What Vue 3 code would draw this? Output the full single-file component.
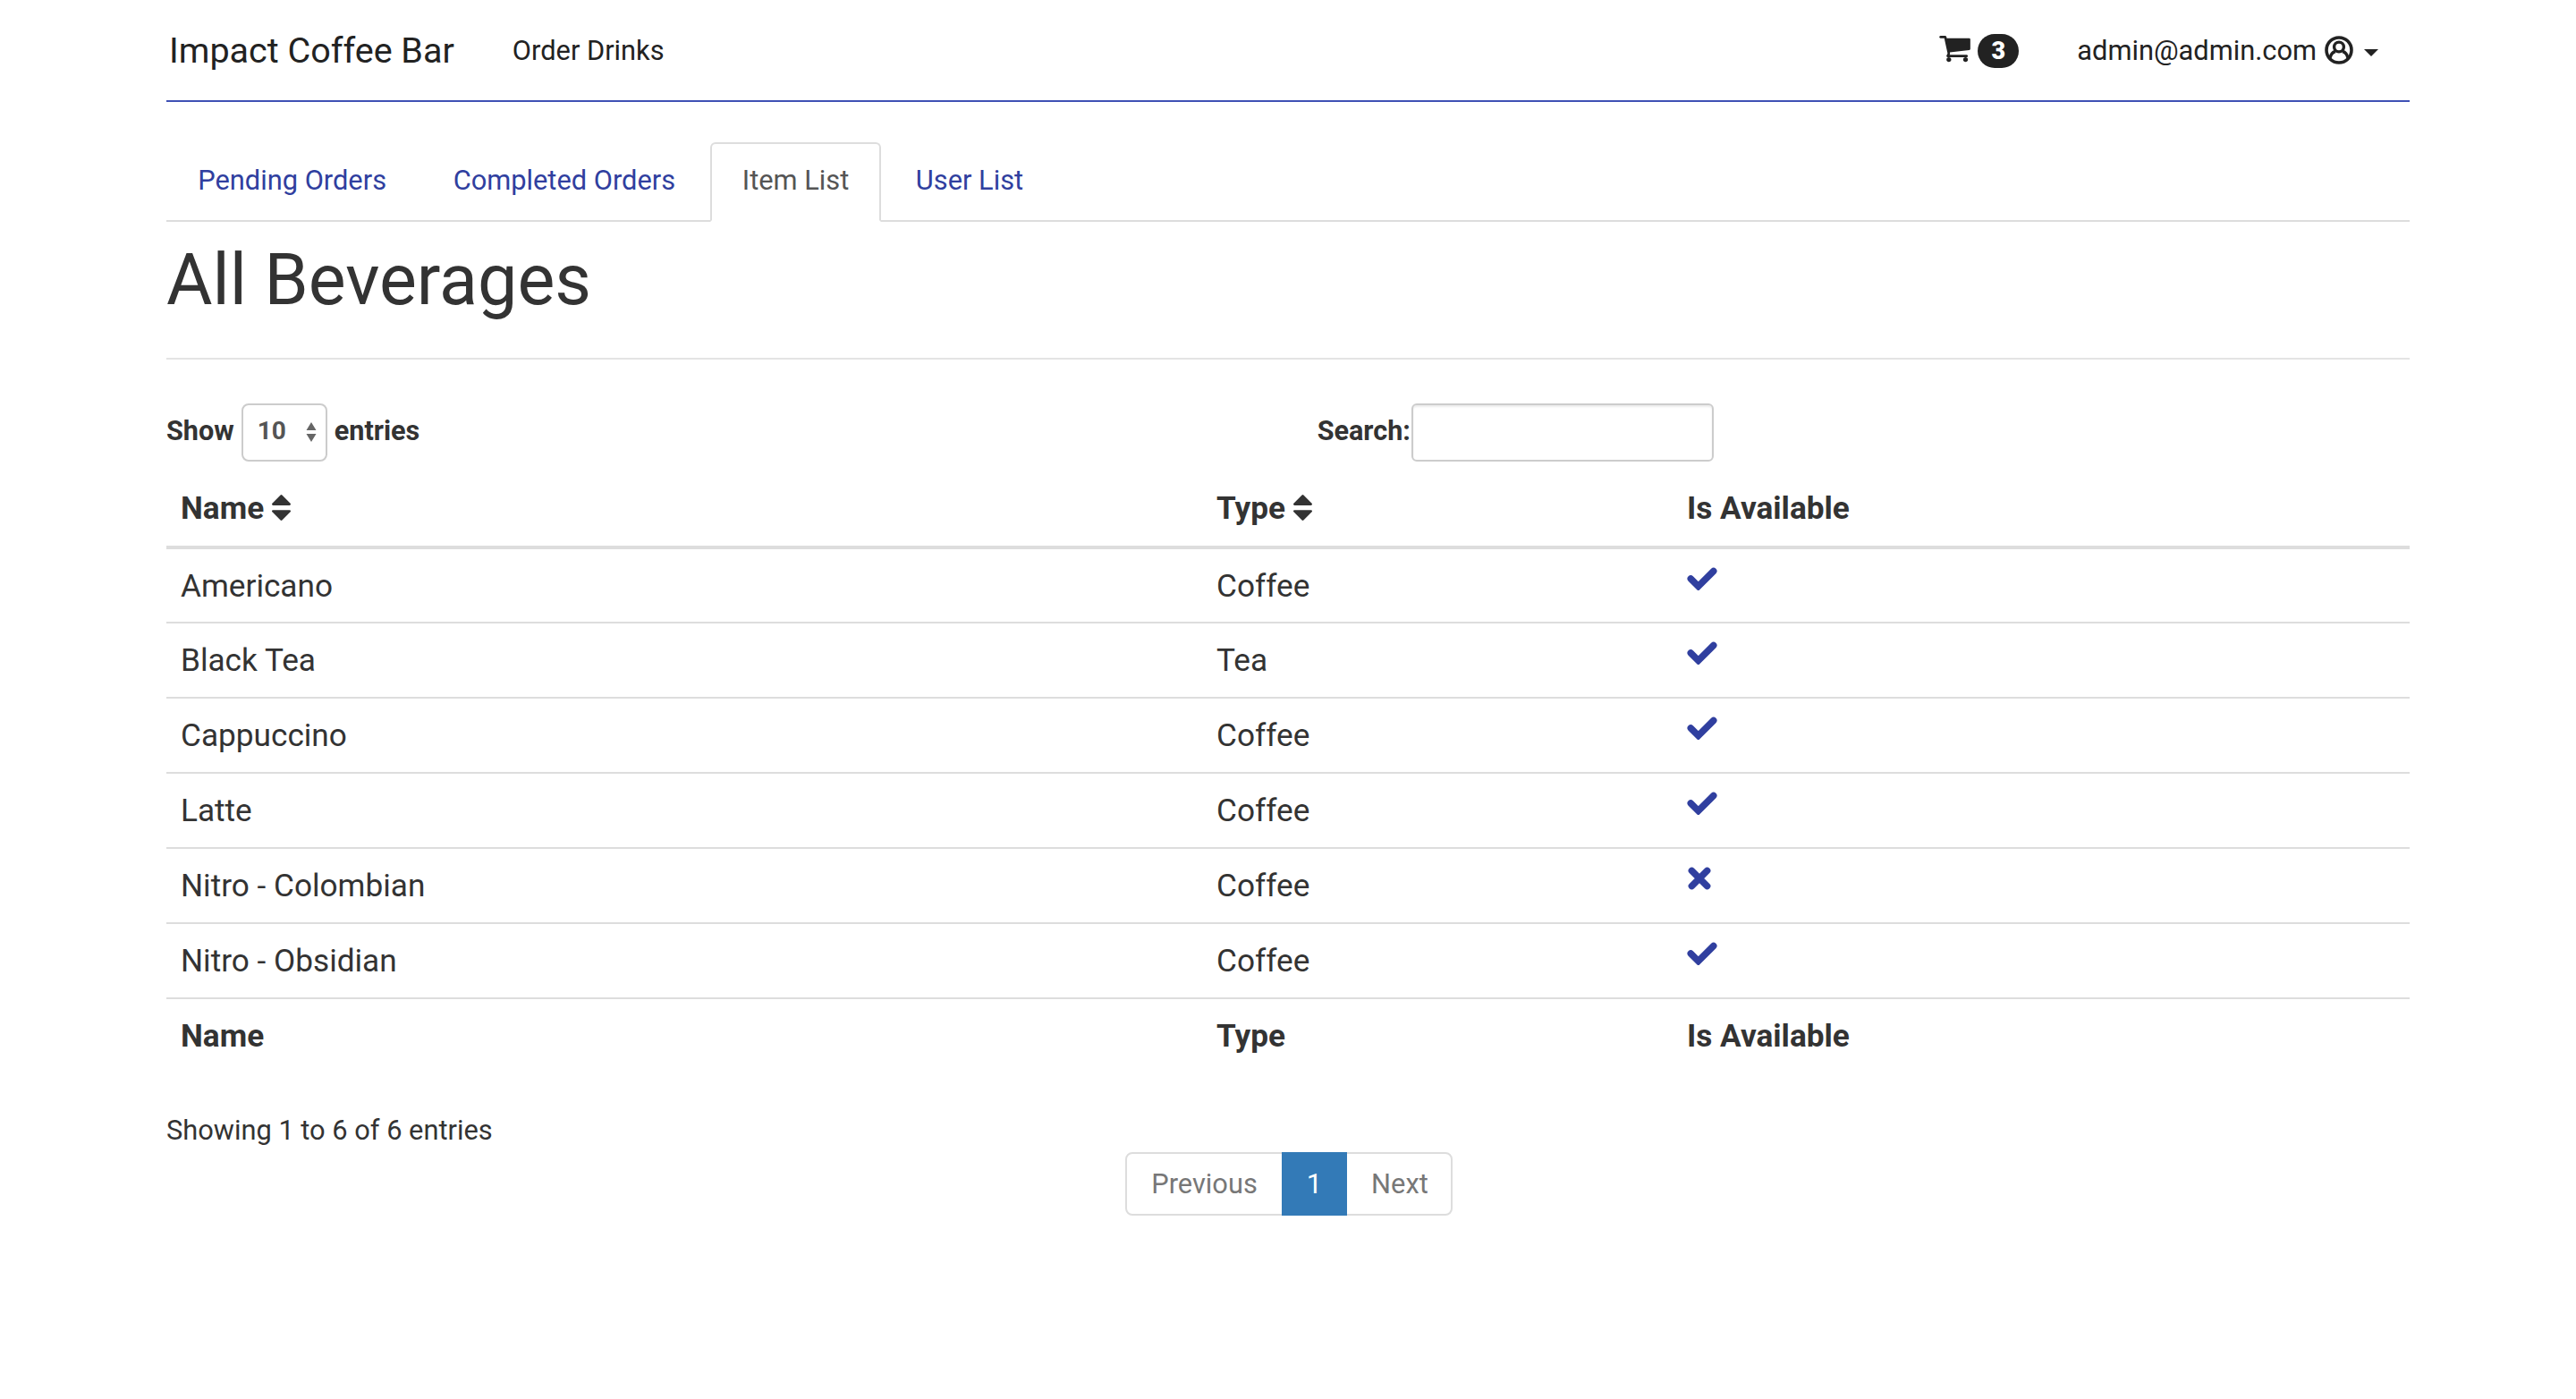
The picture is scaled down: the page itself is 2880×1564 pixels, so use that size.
<template>
  <div class="page">
    <nav class="navbar">
      <a class="brand">Impact Coffee Bar</a>
      <a class="nav-link">Order Drinks</a>
      <div class="nav-right">
        <svg class="cart" viewBox="0 128 1664 1536"><path fill="#222" d="M640 1408q0 52-38 90t-90 38-90-38-38-90 38-90 90-38 90 38 38 90zm896 0q0 52-38 90t-90 38-90-38-38-90 38-90 90-38 90 38 38 90zm128-1088v512q0 24-16.5 42.5t-40.5 21.5l-1044 122q13 60 13 70 0 16-24 64h920q26 0 45 19t19 45-19 45-45 19h-1024q-26 0-45-19t-19-45q0-11 8-31.5t16-36 21.5-40 15.5-29.5l-177-823h-204q-26 0-45-19t-19-45 19-45 45-19h256q16 0 28.5 6.5t19.5 15.5 13 24.5 8 26 5.5 29.5 4.5 26h1201q26 0 45 19t19 45z"/></svg>
        <span class="badge">3</span>
        <span class="email">admin@admin.com</span>
        <svg class="user" viewBox="0 0 32 32">
          <circle cx="16" cy="16" r="14" fill="none" stroke="#222" stroke-width="3.6"/>
          <circle cx="16" cy="12.5" r="5.4" fill="none" stroke="#222" stroke-width="3.4"/>
          <path d="M6 25c1-5 4-7 6-7.500M26 25c-1-5-4-7-6-7.500" fill="none" stroke="#222" stroke-width="3.4"/>
        </svg>
        <span class="caret"></span>
      </div>
    </nav>

    <ul class="tabs">
      <li v-for="tab in tabs" :key="tab" class="tab" :class="{ active: tab === 'Item List' }">{{ tab }}</li>
    </ul>

    <h1 class="title">All Beverages</h1>

    <div class="dt-top">
      <div class="dt-length">
        <span class="dt-label">Show</span>
        <div class="select">
          <span>10</span>
          <svg class="select-arrows" viewBox="0 0 12 24">
            <path d="M6 1l5.500 9H.5zM6 23L.5 14h11z" fill="#666"/>
          </svg>
        </div>
        <span class="dt-label">entries</span>
      </div>
      <label class="dt-search">
        <span class="dt-label">Search:</span>
        <input type="text" />
      </label>
    </div>

    <table class="table">
      <colgroup>
        <col class="col-name" />
        <col class="col-type" />
        <col />
      </colgroup>
      <thead>
        <tr>
          <th>Name <svg class="sort" viewBox="384 240 1024 1360"><path fill="#333" :d="sortPath"/></svg></th>
          <th>Type <svg class="sort" viewBox="384 240 1024 1360"><path fill="#333" :d="sortPath"/></svg></th>
          <th>Is Available</th>
        </tr>
      </thead>
      <tbody>
        <tr v-for="item in items" :key="item.name">
          <td>{{ item.name }}</td>
          <td>{{ item.type }}</td>
          <td>
            <svg v-if="item.available" class="mark check" viewBox="0 0 32 24">
              <path d="M4 12l8 8L28 4" fill="none" stroke="#303f9f" stroke-width="7" stroke-linecap="round" stroke-linejoin="miter"/>
            </svg>
            <svg v-else class="mark cross" viewBox="0 0 26 24">
              <path d="M5 4l16 16M21 4L5 20" fill="none" stroke="#303f9f" stroke-width="7" stroke-linecap="round"/>
            </svg>
          </td>
        </tr>
      </tbody>
      <tfoot>
        <tr>
          <th>Name</th>
          <th>Type</th>
          <th>Is Available</th>
        </tr>
      </tfoot>
    </table>

    <div class="dt-info">Showing 1 to 6 of 6 entries</div>

    <div class="pager-wrap">
      <div class="pager">
        <a class="page-btn">Previous</a>
        <a class="page-btn current">1</a>
        <a class="page-btn">Next</a>
      </div>
    </div>
  </div>
</template>

<script setup>
const tabs = ['Pending Orders', 'Completed Orders', 'Item List', 'User List']

const items = [
  { name: 'Americano', type: 'Coffee', available: true },
  { name: 'Black Tea', type: 'Tea', available: true },
  { name: 'Cappuccino', type: 'Coffee', available: true },
  { name: 'Latte', type: 'Coffee', available: true },
  { name: 'Nitro - Colombian', type: 'Coffee', available: false },
  { name: 'Nitro - Obsidian', type: 'Coffee', available: true }
]

const sortPath = 'M1408 1088q0 26-19 45l-448 448q-19 19-45 19t-45-19l-448-448q-19-19-19-45t19-45 45-19h896q26 0 45 19t19 45zm0-384q0 26-19 45t-45 19h-896q-26 0-45-19t-19-45 19-45l448-448q19-19 45-19t45 19l448 448q19 19 19 45z'
</script>

<style>
body {
  margin: 0;
  background: #fff;
}
</style>

<style scoped>
.page {
  width: 2508px;
  margin: 0 auto;
  height: 1564px;
  font-family: Roboto, "Liberation Sans", sans-serif;
  font-size: 35.2px;
  color: #333;
}

.navbar {
  display: flex;
  align-items: center;
  height: 112px;
  border-bottom: 2px solid #3f51b5;
  color: #222;
  padding-left: 3px;
}

.brand {
  font-size: 39.5px;
  margin-right: 65px;
}

.nav-link {
  font-size: 30.8px;
}

.nav-right {
  display: flex;
  align-items: center;
  margin-left: auto;
  padding-right: 35px;
}

.cart {
  width: 35px;
  height: 32px;
  margin-right: 8px;
}

.badge {
  display: flex;
  align-items: center;
  justify-content: center;
  width: 46px;
  height: 38px;
  margin-top: 2px;
  border-radius: 19px;
  background: #222;
  color: #fff;
  font-size: 27px;
  font-weight: 900;
  margin-right: 65px;
}

.email {
  font-size: 30.8px;
  margin-right: 9px;
}

.user {
  width: 32px;
  height: 32px;
  margin-right: 12px;
}

.caret {
  width: 0;
  height: 0;
  margin-top: 6px;
  border-left: 8px solid transparent;
  border-right: 8px solid transparent;
  border-top: 8px solid #222;
}

.tabs {
  display: flex;
  list-style: none;
  margin: 45px 0 0;
  padding: 0;
  height: 89px;
  border-bottom: 2px solid #ddd;
  box-sizing: border-box;
}

.tab {
  box-sizing: border-box;
  height: 89px;
  padding: 0 33.3px;
  margin-right: 4px;
  border: 2px solid transparent;
  border-radius: 6px 6px 0 0;
  color: #303f9f;
  font-size: 30.8px;
  line-height: 81px;
}

.tab.active {
  color: #555;
  border-color: #ddd;
  border-bottom-color: #fff;
  background: #fff;
}

.title {
  margin: 0;
  padding: 15px 0 34px;
  height: 103px;
  border-bottom: 2px solid #e4e4e4;
  font-size: 79px;
  font-weight: 400;
  line-height: 100px;
  color: #333;
}

.dt-top {
  display: flex;
  justify-content: space-between;
  align-items: center;
  width: 1730px;
  margin-top: 49px;
  font-size: 30.6px;
  font-weight: 700;
}

.dt-length {
  display: flex;
  align-items: center;
  gap: 8px;
}

.dt-label {
  margin-bottom: 5px;
}

.select {
  box-sizing: border-box;
  display: flex;
  align-items: center;
  justify-content: space-between;
  width: 96px;
  height: 65px;
  padding: 0 10px 5px 16px;
  border: 2px solid #ccc;
  border-radius: 8px;
  color: #555;
  font-size: 28px;
}

.select-arrows {
  width: 12px;
  height: 24px;
  margin-top: 3px;
}

.dt-search {
  display: flex;
  align-items: center;
}

.dt-search input {
  box-sizing: border-box;
  width: 338px;
  height: 65px;
  margin-left: 1px;
  border: 2px solid #ccc;
  border-radius: 6px;
  box-shadow: inset 0 2px 2px rgba(0, 0, 0, 0.075);
  outline: none;
  background: #fff;
}

.table {
  width: 100%;
  margin-top: 14px;
  border-collapse: collapse;
  table-layout: fixed;
}

.col-name {
  width: 1158px;
}

.col-type {
  width: 526px;
}

.table th,
.table td {
  padding: 0 16px;
  text-align: left;
  line-height: 40px;
}

.table th {
  font-weight: 700;
}

.table thead th {
  height: 82px;
  padding-bottom: 4px;
  border-bottom: 4px solid #ddd;
  box-sizing: border-box;
}

.table tbody td {
  height: 84px;
  box-sizing: border-box;
  border-bottom: 2px solid #ddd;
}

.table tfoot th {
  height: 84px;
  padding-bottom: 2px;
  box-sizing: border-box;
}

.sort {
  width: 21px;
  height: 30px;
  vertical-align: -3px;
}

.mark {
  display: block;
  margin-bottom: 16px;
}

.check {
  width: 34px;
  height: 26px;
}

.cross {
  width: 28px;
  height: 26px;
}

.dt-info {
  margin-top: 42px;
  font-size: 30.8px;
  line-height: 44px;
}

.pager-wrap {
  display: flex;
  justify-content: center;
  margin-top: 2px;
  padding-left: 2px;
}

.pager {
  display: flex;
  height: 71px;
  box-sizing: border-box;
  border: 2px solid #ddd;
  border-radius: 8px;
  font-size: 30.8px;
  color: #777;
}

.page-btn {
  display: flex;
  align-items: center;
  padding: 0 27px;
}

.page-btn:last-child {
  padding-right: 25px;
}

.page-btn.current {
  margin: -2px 0;
  padding: 0 28px;
  background: #337ab7;
  color: #fff;
}
</style>
